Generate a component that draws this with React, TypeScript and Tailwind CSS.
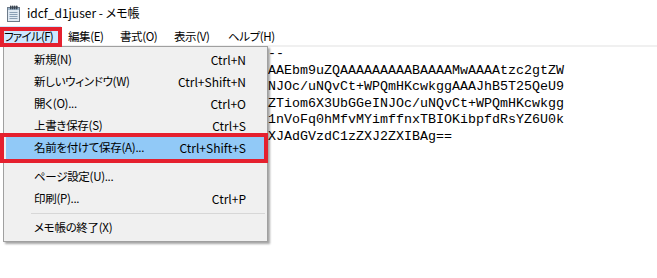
import React from 'react'

const menuBar = [
  { label: 'ファイル(F)', w: 'w-[61px] pl-[4px] tracking-[-0.7px]', active: true },
  { label: '編集(E)', w: 'w-[52px] pl-[7px] tracking-[-0.4px]' },
  { label: '書式(O)', w: 'w-[54px] pl-[7px] tracking-[-0.4px]' },
  { label: '表示(V)', w: 'w-[54px] pl-[7px] tracking-[-0.4px]' },
  { label: 'ヘルプ(H)', w: 'pl-[7px] tracking-[-0.4px]' },
]

type Item = { label?: string; key?: string; sep?: boolean; hot?: boolean }

const fileMenu: Item[] = [
  { label: '新規(N)', key: 'Ctrl+N' },
  { label: '新しいウィンドウ(W)', key: 'Ctrl+Shift+N' },
  { label: '開く(O)...', key: 'Ctrl+O' },
  { label: '上書き保存(S)', key: 'Ctrl+S' },
  { label: '名前を付けて保存(A)...', key: 'Ctrl+Shift+S', hot: true },
  { sep: true },
  { label: 'ページ設定(U)...' },
  { label: '印刷(P)...', key: 'Ctrl+P' },
  { sep: true },
  { label: 'メモ帳の終了(X)' },
]

const lines = [
  '--',
  'AAEbm9uZQ' + 'AAAAAAAAA' + 'BAAAAMwAAAAtzc2gtZW',
  'NJOc/uNQvCt+WPQmHKcwkggAAAJhB5T25QeU9',
  'ZTiom6X3UbGGeINJOc/uNQvCt+WPQmHKcwkgg',
  '1nVoFq0hMfvMYimffnxTBIOKibpfdRsYZ6U0k',
  'XJAdGVzdC1zZXJ2ZXIBAg==',
]

function NotepadIcon() {
  return (
    <svg width="15" height="17" viewBox="0 0 15 17">
      <rect x="1.5" y="2.5" width="12" height="14" fill="#dfe9f3" stroke="#6d7b8a" />
      <rect x="2" y="3" width="11" height="2" fill="#9fb6cc" />
      {[5, 7, 9, 11].map((x) => (
        <rect key={x} x={x - 1} y="0.5" width="1.5" height="4" rx="0.7" fill="#3a4450" />
      ))}
      {[7.5, 9.5, 11.5, 13.5].map((y) => (
        <line key={y} x1="3.5" x2="11.5" y1={y} y2={y} stroke="#8aa0b6" strokeWidth="1" />
      ))}
    </svg>
  )
}

export default function App() {
  return (
    <div className="relative w-[657px] h-[278px] overflow-hidden bg-white text-black text-[12px] font-['Noto_Sans_CJK_JP',sans-serif] [font-feature-settings:'palt']">
      {/* title bar */}
      <div className="h-[26px] flex items-center pl-[6px] gap-[6px]">
        <NotepadIcon />
        <span className="leading-none">idcf_d1juser - メモ帳</span>
      </div>

      {/* menu bar */}
      <div className="h-[21px] flex border-b-2 border-[#f0f0f0] whitespace-nowrap text-[11.5px]">
        {menuBar.map((m) => (
          <div
            key={m.label}
            className={`${m.w} flex items-center pt-[2px] ${m.active ? 'bg-[#cce8ff]' : ''}`}
          >
            {m.label}
          </div>
        ))}
      </div>

      {/* edit area */}
      <div className="pl-[268px] -mt-[1px] font-['Liberation_Mono',monospace] text-[13.33px] leading-[16.5px] whitespace-pre">
        {lines.map((l, i) => (
          <div key={i}>{l}</div>
        ))}
      </div>

      {/* dropdown */}
      <div className="absolute left-[3px] top-[46px] w-[265px] bg-[#f0f0f0] border border-[#a0a0a0] shadow-[2px_2px_2px_rgba(0,0,0,0.35)] p-[2px] whitespace-nowrap">
        {fileMenu.map((it, i) =>
          it.sep ? (
            <div key={i} className="h-[7px] flex items-center pl-[25px]">
              <div className="h-px w-full bg-[#d7d7d7]" />
            </div>
          ) : (
            <div
              key={i}
              className={`h-[22px] flex items-center justify-between pl-[28px] pr-[19px] ${it.hot ? 'bg-[#91c9f7]' : ''}`}
            >
              <span className="text-[11.5px] tracking-[-0.3px]">{it.label}</span>
              {it.key && <span>{it.key}</span>}
            </div>
          )
        )}
      </div>

      {/* red annotation boxes */}
      <div className="absolute left-0 top-[27px] w-[62px] h-[20px] border-[4px] border-[#e5202e]" />
      <div className="absolute left-0 top-[133px] w-[268px] h-[30px] border-[4px] border-[#e5202e]" />
    </div>
  )
}
